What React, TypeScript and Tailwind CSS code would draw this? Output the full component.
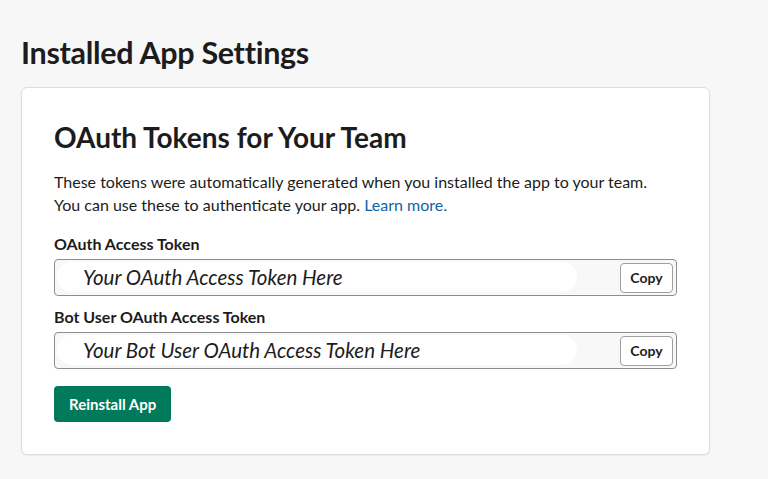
const tokens = [
  { label: "OAuth Access Token", value: "Your OAuth Access Token Here" },
  { label: "Bot User OAuth Access Token", value: "Your Bot User OAuth Access Token Here" },
];

function TokenField({ label, value }: { label: string; value: string }) {
  return (
    <div className="mt-[11px] first:mt-0">
      <div className="text-[16px] font-bold leading-[20px] text-[#1d1c1d]">{label}</div>
      <div className="relative mt-[5px] flex h-[37px] w-[623px] items-center rounded-[4px] border border-[#8d8d8d] bg-[#f8f8f8] pl-[28px] pr-[3px]">
        <div className="pointer-events-none absolute left-[2px] top-[2px] h-[30px] w-[520px] rounded-full bg-white" />
        <span className="relative flex-1 text-[20.5px] italic text-[#1d1c1d]">{value}</span>
        <button className="relative h-[30px] w-[53px] rounded-[4px] border border-[#a0a0a0] bg-white text-[14px] font-bold text-[#1d1c1d]">
          Copy
        </button>
      </div>
    </div>
  );
}

export default function App() {
  return (
    <div className="min-h-screen bg-[#f7f7f7] px-[21px] pt-[34px] font-['Lato','Open_Sans',sans-serif] text-[#1d1c1d]">
      <h1 className="text-[30.5px] font-bold leading-[36px] tracking-[-0.3px]">Installed App Settings</h1>
      <div className="mt-[17px] h-[368px] w-[689px] rounded-[6px] border border-[#dddddd] bg-white px-[32px] pt-[32px] shadow-[0_1px_2px_rgba(0,0,0,0.06)]">
        <h2 className="text-[28px] font-bold leading-[34px]">OAuth Tokens for Your Team</h2>
        <p className="mt-[16px] text-[16px] leading-[23px]">
          These tokens were automatically generated when you installed the app to your team.
          <br />
          You can use these to authenticate your app.{" "}
          <a className="text-[#1264a3]" href="#">
            Learn more.
          </a>
        </p>
        <div className="mt-[18px]">
          {tokens.map((t) => (
            <TokenField key={t.label} label={t.label} value={t.value} />
          ))}
        </div>
        <button className="mt-[17px] h-[36px] rounded-[4px] bg-[#007a5a] px-[15px] text-[15px] font-bold text-white">
          Reinstall App
        </button>
      </div>
    </div>
  );
}
